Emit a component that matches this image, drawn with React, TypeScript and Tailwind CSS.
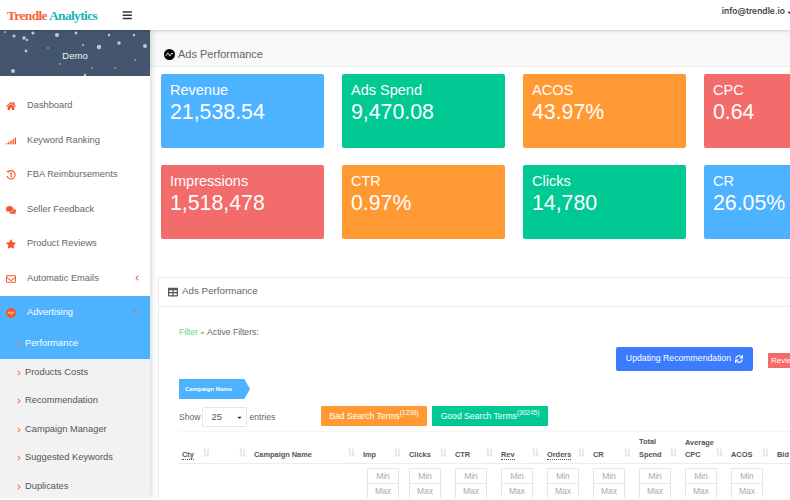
import type { ReactNode } from "react";
import {
  FaBars,
  FaCaretDown,
  FaCaretUp,
  FaChevronRight,
  FaComments,
  FaHome,
  FaRegEnvelope,
  FaStar,
  FaSync,
  FaTable,
} from "react-icons/fa";

const stars = [
  [14, 6, 1.6], [24, 8, 1.8], [27, 10, 1.2], [33, 3, 1.6], [57, 5, 2], [76, 3, 1.4], [109, 5, 1.2],
  [99, 17, 2.2], [119, 13, 1.8], [145, 16, 2], [26, 21, 1.4], [13, 41, 2], [83, 15, 1], [92, 38, 0.8],
  [115, 38, 0.8], [85, 45, 1.2], [48, 18, 0.8], [134, 5, 1.2], [135, 30, 0.8], [60, 34, 0.8], [5, 2, 1],
];

function Wave({ className }: { className: string }) {
  return (
    <svg viewBox="0 0 12 12" className={className}>
      <circle cx="6" cy="6" r="6" fill="currentColor" />
      <path d="M2 7.5 L4.2 4.2 L6.4 7.8 L8.4 4.4 L10 5.5" fill="none" stroke="#f4f4f4" strokeWidth="1" />
    </svg>
  );
}

function SignalIcon() {
  return (
    <svg viewBox="0 0 12 8" className="h-[8px] w-[10px] fill-[#f4562a]">
      <rect x="0" y="6.5" width="1.6" height="1.5" />
      <rect x="2.6" y="5" width="1.6" height="3" />
      <rect x="5.2" y="3.5" width="1.6" height="4.5" />
      <rect x="7.8" y="1.8" width="1.6" height="6.2" />
      <rect x="10.4" y="0" width="1.6" height="8" />
    </svg>
  );
}

function RefundIcon() {
  return (
    <svg viewBox="0 0 12 12" className="h-[10px] w-[10px]">
      <path d="M2.4 2.2 A5 5 0 1 1 1.2 7.4" fill="none" stroke="#f4562a" strokeWidth="1.3" />
      <path d="M0.6 1.2 L3.6 1 L3 3.8 Z" fill="#f4562a" />
      <path d="M6.2 3 V9 M4.8 4.4 L6.2 3.2" fill="none" stroke="#f4562a" strokeWidth="1.3" />
    </svg>
  );
}

function SortIcon() {
  return (
    <svg viewBox="0 0 7 9" className="mb-[4px] h-[9px] w-[7px] shrink-0 stroke-[#c9c9c9]" fill="none" strokeWidth="0.8">
      <path d="M2 8.5 V0.8 M0.6 2.2 L2 0.8" />
      <path d="M5 0.5 V8.2 M3.6 6.8 L5 8.2" />
    </svg>
  );
}

function MenuItem({ icon, label }: { icon: ReactNode; label: string }) {
  return (
    <div className="flex h-[34.5px] items-center text-[9.3px] text-[#666]">
      <div className="flex w-[27px] pl-[6px]">
        <div className="flex w-[10px] justify-center">{icon}</div>
      </div>
      <span>{label}</span>
    </div>
  );
}

function SubItem({ label, active = false }: { label: string; active?: boolean }) {
  return (
    <div className={`flex h-[28.5px] items-center gap-[3px] pl-[16px] text-[9.3px] ${active ? "text-white" : "text-[#555]"}`}>
      <FaChevronRight className="text-[6px] text-[#f4794f]" />
      <span>{label}</span>
    </div>
  );
}

function StatCard({ title, value, color }: { title: string; value: string; color: string }) {
  return (
    <div className={`h-[74px] w-[163px] shrink-0 rounded-[2px] px-[9px] pt-[7px] text-white ${color}`}>
      <div className="text-[14.5px] leading-[18px]">{title}</div>
      <div className="text-[21.3px] leading-[26px]">{value}</div>
    </div>
  );
}

function HeadCell({ children, sort = true }: { children?: ReactNode; sort?: boolean }) {
  return (
    <div className="flex items-end justify-between pl-[3px] pr-[5px]">
      <div className="text-[7.4px] font-semibold leading-[13px] text-[#555]">{children}</div>
      {sort ? <SortIcon /> : null}
    </div>
  );
}

function RangeCell({ className = "" }: { className?: string }) {
  return (
    <div className={`flex flex-col ${className}`}>
      <div className="flex h-[16px] w-[32px] items-center justify-center border border-[#e6e6e6] text-[8.5px] text-[#aaa]">Min</div>
      <div className="flex h-[16px] w-[32px] items-center justify-center border border-t-0 border-[#e6e6e6] text-[8.5px] text-[#aaa]">Max</div>
    </div>
  );
}

export default function App() {
  return (
    <div className="h-[500px] w-[790px] overflow-hidden bg-white">
      <div className="flex h-[498px] flex-col overflow-hidden bg-white font-['Liberation_Sans',sans-serif]">
        <header className="relative z-10 flex h-[30px] shrink-0 items-center bg-white shadow-[0_1px_3px_rgba(0,0,0,0.18)]">
          <div className="w-[150px] pl-[7px]">
            <span className="font-['Liberation_Serif',serif] text-[13.5px] font-bold tracking-[-0.65px]">
              <span className="text-[#f4623a]">Trendle</span> <span className="text-[#1ab5b5]">Analytics</span>
            </span>
          </div>
          <FaBars className="absolute left-[122px] top-[10px] text-[10.5px] text-[#333]" />
          <div className="absolute right-[-3px] top-[5px] flex items-center font-['Inter',sans-serif] text-[8.5px] font-semibold text-[#444]">
            info@trendle.io
            <FaCaretDown className="ml-px mt-[3px] text-[7px] text-[#333]" />
          </div>
        </header>

        <div className="flex min-h-0 flex-1">
          <aside className="relative z-[5] w-[150px] shrink-0 overflow-hidden bg-white shadow-[2px_0_5px_rgba(0,0,0,0.15)]">
            <div className="relative flex h-[46px] items-center justify-center bg-[#43566e] pt-[6px] text-[9.5px] text-[#eef1f4]">
              <svg viewBox="0 0 150 46" className="absolute inset-0 h-full w-full">
                {stars.map(([x, y, r]) => (
                  <circle key={`${x}-${y}`} cx={x} cy={y} r={r} fill="#dfe6ee" opacity="0.8" />
                ))}
              </svg>
              <span className="relative">Demo</span>
            </div>
            <div className="pt-[13px]">
              <MenuItem icon={<FaHome className="text-[10px] text-[#f4562a]" />} label="Dashboard" />
              <MenuItem icon={<SignalIcon />} label="Keyword Ranking" />
              <MenuItem icon={<RefundIcon />} label="FBA Reimbursements" />
              <MenuItem icon={<FaComments className="text-[10px] text-[#f4562a]" />} label="Seller Feedback" />
              <MenuItem icon={<FaStar className="text-[10px] text-[#f4562a]" />} label="Product Reviews" />
              <div className="relative">
                <MenuItem icon={<FaRegEnvelope className="text-[10px] text-[#f4562a]" />} label="Automatic Emails" />
                <FaChevronRight className="absolute left-[134px] top-[13px] rotate-180 text-[6px] text-[#f4562a]" />
              </div>
            </div>
            <div className="bg-[#4db2ff]">
              <div className="relative">
                <div className="flex h-[34px] items-center text-[9.3px] text-white">
                  <div className="w-[27px] pl-[6px]">
                    <Wave className="h-[10px] w-[10px] text-[#f0562a]" />
                  </div>
                  Advertising
                </div>
                <FaChevronRight className="absolute left-[132px] top-[12px] rotate-90 text-[6px] text-[#e8705a]" />
              </div>
              <SubItem label="Performance" active />
            </div>
            <div className="bg-[#f2f2f2]">
              <SubItem label="Products Costs" />
              <SubItem label="Recommendation" />
              <SubItem label="Campaign Manager" />
              <SubItem label="Suggested Keywords" />
              <SubItem label="Duplicates" />
            </div>
          </aside>

          <main className="min-w-0 flex-1 overflow-hidden bg-white">
            <div className="flex h-[37px] items-center gap-[3px] border-b border-[#eeeeee] bg-[#f8f8f8] pl-[14px] pt-[12px] text-[11px] text-[#666]">
              <Wave className="h-[11px] w-[11px] text-black" />
              Ads Performance
            </div>

            <div className="flex flex-col gap-[17px] pl-[11px] pt-[7px]">
              <div className="flex gap-[18px]">
                <StatCard title="Revenue" value="21,538.54" color="bg-[#4db2ff]" />
                <StatCard title="Ads Spend" value="9,470.08" color="bg-[#00c994]" />
                <StatCard title="ACOS" value="43.97%" color="bg-[#ff9933]" />
                <StatCard title="CPC" value="0.64" color="bg-[#f36c6c]" />
              </div>
              <div className="flex gap-[18px]">
                <StatCard title="Impressions" value="1,518,478" color="bg-[#f36c6c]" />
                <StatCard title="CTR" value="0.97%" color="bg-[#ff9933]" />
                <StatCard title="Clicks" value="14,780" color="bg-[#00c994]" />
                <StatCard title="CR" value="26.05%" color="bg-[#4db2ff]" />
              </div>
            </div>

            <section className="ml-[8px] mt-[38px] w-[640px] border-l border-t border-[#ececec]">
              <div className="flex h-[29px] items-center gap-[4px] border-b border-[#ececec] pb-[1px] pl-[9px] text-[9.8px] text-[#666]">
                <FaTable className="text-[10px] text-[#555]" />
                Ads Performance
              </div>

              <div className="pl-[20px]">
                <div className="flex items-center pt-[19px] text-[8.6px] leading-[12px] text-[#666]">
                  <span className="text-[#71cf8a]">Filter</span>
                  <FaCaretUp className="mx-[1px] text-[7px] text-[#71cf8a]" />
                  Active Filters:
                </div>

                <div className="relative h-[23px]">
                  <button className="absolute left-[437px] top-[9px] flex h-[24px] w-[137px] items-center justify-center gap-[4px] rounded-[2px] bg-[#3b7cff] text-[8.7px] text-white">
                    Updating Recommendation
                    <FaSync className="text-[8px]" />
                  </button>
                  <div className="absolute left-[589px] top-[15px] flex h-[15px] w-[40px] items-center overflow-hidden bg-[#f36c6c] pl-[3px] text-[8px] text-white">
                    Review
                  </div>
                </div>

                <div className="mt-[18px] flex h-[20px] w-[71px] items-center bg-[#4db2ff] pl-[6px] text-[6px] font-bold text-white [clip-path:polygon(0_0,92%_0,100%_50%,92%_100%,0_100%)]">
                  Campaign Name
                </div>

                <div className="relative mt-[8px] flex h-[20px] items-center text-[8.6px] text-[#666]">
                  Show
                  <div className="ml-[1px] mr-[3px] flex h-[20px] w-[45px] items-center justify-between rounded-[1px] border border-[#e6e6e6] pl-[9px] pr-[3px] text-[9.5px] text-[#555]">
                    25
                    <FaCaretDown className="text-[7px] text-[#222]" />
                  </div>
                  entries
                  <div className="absolute left-[142px] top-[-1px] flex gap-[5px]">
                    <div className="flex h-[20px] w-[106px] items-center justify-center rounded-[1px] bg-[#ff9933] text-[8.6px] text-white">
                      <span>Bad Search Terms<sup className="text-[6.5px]">(1238)</sup></span>
                    </div>
                    <div className="flex h-[20px] w-[116px] items-center justify-center rounded-[1px] bg-[#00c994] text-[8.6px] text-white">
                      <span>Good Search Terms<sup className="text-[6.5px]">(30245)</sup></span>
                    </div>
                  </div>
                </div>

                <div className="h-[5px] border-b border-[#f5f5f5]" />

                <div className="grid h-[32px] grid-cols-[36px_36px_109px_repeat(9,46px)_40px] items-end border-b border-[#ececec] pb-[2px]">
                  <HeadCell><span className="border-b border-dotted border-[#555]">Cty</span></HeadCell>
                  <HeadCell />
                  <HeadCell>Campaign Name</HeadCell>
                  <HeadCell>Imp</HeadCell>
                  <HeadCell>Clicks</HeadCell>
                  <HeadCell>CTR</HeadCell>
                  <HeadCell><span className="border-b border-dotted border-[#555]">Rev</span></HeadCell>
                  <HeadCell><span className="border-b border-dotted border-[#555]">Orders</span></HeadCell>
                  <HeadCell>CR</HeadCell>
                  <HeadCell>Total<br />Spend</HeadCell>
                  <HeadCell><span className="block leading-[11px]">Average</span>CPC</HeadCell>
                  <HeadCell>ACOS</HeadCell>
                  <HeadCell sort={false}>Bid</HeadCell>
                </div>
                <div className="grid grid-cols-[36px_36px_109px_repeat(9,46px)_40px] pt-[4px]">
                  <div className="col-span-3" />
                  <RangeCell className="translate-x-[7px]" />
                  <RangeCell className="pl-[3px]" />
                  <RangeCell className="pl-[3px]" />
                  <RangeCell className="pl-[3px]" />
                  <RangeCell className="pl-[3px]" />
                  <RangeCell className="pl-[3px]" />
                  <RangeCell className="pl-[3px]" />
                  <RangeCell className="pl-[3px]" />
                  <RangeCell className="pl-[3px]" />
                </div>
              </div>
            </section>
          </main>
        </div>
      </div>
    </div>
  );
}
